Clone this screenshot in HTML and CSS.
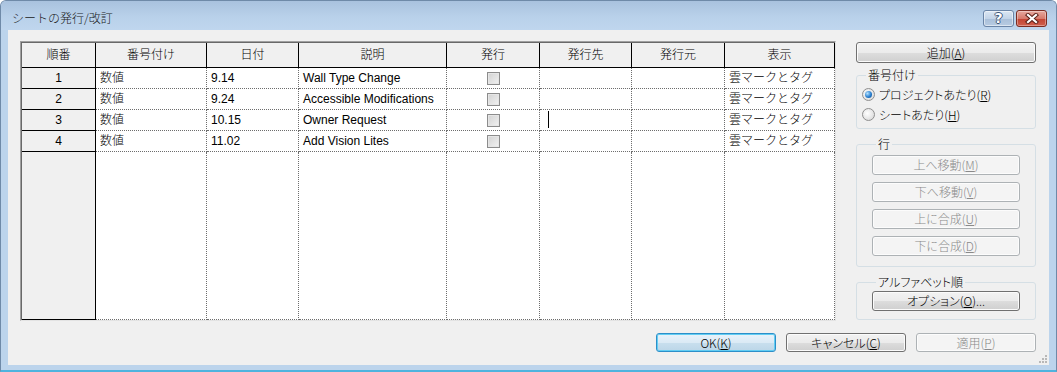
FILE: index.html
```html
<!DOCTYPE html>
<html lang="ja">
<head>
  <meta charset="UTF-8" />
  <title>シートの発行/改訂</title>
  <link rel="stylesheet" href="styles.css">
</head>
<body>
  <div class="window">
    <div class="titlebar">
      <span class="title">シートの発行/改訂</span>
      <div class="caption-btns">
        <button class="cap help">?</button>
        <button class="cap close">
          <svg width="14" height="11" viewBox="0 0 14 11">
            <path d="M3 2 L11 9 M11 2 L3 9" stroke="#5b2118" stroke-width="4.2" stroke-linecap="square"/>
            <path d="M3 2 L11 9 M11 2 L3 9" stroke="#fff" stroke-width="2.2" stroke-linecap="square"/>
          </svg>
        </button>
      </div>
    </div>

    <div class="client">
      <div class="top">
        <!-- revision table -->
        <div class="sheet-grid">
          <div class="hd">順番</div>
          <div class="hd">番号付け</div>
          <div class="hd">日付</div>
          <div class="hd">説明</div>
          <div class="hd">発行</div>
          <div class="hd">発行先</div>
          <div class="hd">発行元</div>
          <div class="hd">表示</div>

          <div class="rh">1</div>
          <div class="cell">数値</div>
          <div class="cell">9.14</div>
          <div class="cell">Wall Type Change</div>
          <div class="cell chk"><span class="checkbox"></span></div>
          <div class="cell"></div>
          <div class="cell"></div>
          <div class="cell">雲マークとタグ</div>

          <div class="rh">2</div>
          <div class="cell">数値</div>
          <div class="cell">9.24</div>
          <div class="cell">Accessible Modifications</div>
          <div class="cell chk"><span class="checkbox"></span></div>
          <div class="cell"></div>
          <div class="cell"></div>
          <div class="cell">雲マークとタグ</div>

          <div class="rh">3</div>
          <div class="cell">数値</div>
          <div class="cell">10.15</div>
          <div class="cell">Owner Request</div>
          <div class="cell chk"><span class="checkbox"></span></div>
          <div class="cell"><span class="caret"></span></div>
          <div class="cell"></div>
          <div class="cell">雲マークとタグ</div>

          <div class="rh">4</div>
          <div class="cell">数値</div>
          <div class="cell">11.02</div>
          <div class="cell">Add Vision Lites</div>
          <div class="cell chk"><span class="checkbox"></span></div>
          <div class="cell"></div>
          <div class="cell"></div>
          <div class="cell">雲マークとタグ</div>

          <div class="rh fill"></div>
          <div class="cell fill"></div>
          <div class="cell fill"></div>
          <div class="cell fill"></div>
          <div class="cell fill"></div>
          <div class="cell fill"></div>
          <div class="cell fill"></div>
          <div class="cell fill"></div>
        </div>

        <!-- side panel -->
        <div class="side">
          <button class="btn add">追加(<u>A</u>)</button>

          <fieldset class="group numbering">
            <legend>番号付け</legend>
            <label class="radio-row"><span class="radio on"></span><span>プロジェクトあたり(<u>R</u>)</span></label>
            <label class="radio-row"><span class="radio"></span><span>シートあたり(<u>H</u>)</span></label>
          </fieldset>

          <fieldset class="group rows">
            <legend>行</legend>
            <button class="btn" disabled>上へ移動(<u>M</u>)</button>
            <button class="btn" disabled>下へ移動(<u>V</u>)</button>
            <button class="btn" disabled>上に合成(<u>U</u>)</button>
            <button class="btn" disabled>下に合成(<u>D</u>)</button>
          </fieldset>

          <fieldset class="group alpha">
            <legend>アルファベット順</legend>
            <button class="btn">オプション(<u>O</u>)...</button>
          </fieldset>
        </div>
      </div>

      <div class="actions">
        <button class="btn default">OK(<u>K</u>)</button>
        <button class="btn">キャンセル(<u>C</u>)</button>
        <button class="btn" disabled>適用(<u>P</u>)</button>
      </div>

      <svg class="grip" width="10" height="10" viewBox="0 0 10 10">
        <rect x="7" y="1" width="2" height="2" fill="#b8b8b8"/>
        <rect x="4" y="4" width="2" height="2" fill="#b8b8b8"/>
        <rect x="7" y="4" width="2" height="2" fill="#b8b8b8"/>
        <rect x="1" y="7" width="2" height="2" fill="#b8b8b8"/>
        <rect x="4" y="7" width="2" height="2" fill="#b8b8b8"/>
        <rect x="7" y="7" width="2" height="2" fill="#b8b8b8"/>
      </svg>
    </div>
  </div>
</body>
</html>
```

FILE: styles.css
```css
* { box-sizing: border-box; }
body {
  margin: 0;
  background: #fff;
  font-family: "Noto Sans CJK JP", sans-serif;
  font-size: 12px;
  font-weight: 300;
  color: #000;
}
.window {
  width: 1057px;
  height: 372px;
  border: 1px solid #6f8aa8;
  border-bottom: 2px solid #4fb3de;
  border-radius: 6px 6px 0 0;
  background: #bcd4ec;
  padding: 0 7px 5px 7px;
  display: flex;
  flex-direction: column;
  overflow: hidden;
}
.titlebar {
  height: 29px;
  margin: 0 -7px;
  padding: 0 9px 0 11px;
  display: flex;
  justify-content: space-between;
  align-items: flex-start;
  background: linear-gradient(#a9c2de, #b9d1ea 55%, #bfd6ee);
}
.title {
  margin-top: 9px;
  line-height: 16px;
  color: #1a1a1a;
}
.caption-btns {
  display: flex;
  gap: 2px;
  margin-top: 9px;
}
.cap {
  width: 31px;
  height: 17px;
  padding: 0;
  border-radius: 3px;
  display: flex;
  align-items: center;
  justify-content: center;
}
.help {
  border: 1px solid #6a84a6;
  background: linear-gradient(#dbe6f3, #c3d4e8 50%, #a9bfd9 51%, #b7cbe2);
  box-shadow: inset 0 0 0 1px rgba(255, 255, 255, 0.5);
  color: #fff;
  font-family: "DejaVu Sans", sans-serif;
  font-weight: bold;
  font-size: 14px;
  line-height: 15px;
  text-shadow: 1px 0 #3f5677, -1px 0 #3f5677, 0 1px #3f5677, 0 -1px #3f5677;
}
.close {
  border: 1px solid #7b2c22;
  background: linear-gradient(#e6a99f, #d77a6c 50%, #c24332 51%, #d0604e);
  box-shadow: inset 0 0 0 1px rgba(255, 255, 255, 0.35);
}

.client {
  position: relative;
  flex: 1;
  background: #f0f0f0;
  padding: 11px 13px 13px 12px;
  display: flex;
  flex-direction: column;
}
.top {
  display: flex;
  gap: 20px;
  align-items: flex-start;
}

/* revision table */
.sheet-grid {
  width: 816px;
  height: 280px;
  display: grid;
  grid-template-columns: 74px 111px 92px 148px 93px 92px 93px 110px;
  grid-template-rows: 25px repeat(4, 21px) 1fr;
  border: 1px solid;
  border-color: #a0a0a0 #e3e3e3 #e3e3e3 #a0a0a0;
  padding: 1px 0 0 1px;
  box-shadow: inset 1px 1px 0 #696969;
  background: #fff;
  font-family: "Liberation Sans", "Noto Sans CJK JP", sans-serif;
  font-size: 12px;
}
.hd {
  background: #f0f0f0;
  border-right: 1px solid #000;
  border-bottom: 1px solid #000;
  text-align: center;
  line-height: 24px;
}
.rh {
  background: #f0f0f0;
  border-right: 1px solid #000;
  border-bottom: 1px solid #000;
  text-align: center;
  line-height: 20px;
}
.cell {
  background: #fff;
  border-right: 1px dotted #6d6d6d;
  border-bottom: 1px dotted #6d6d6d;
  padding-left: 4px;
  line-height: 20px;
  white-space: nowrap;
  overflow: hidden;
}
.cell.chk {
  padding: 0;
  display: flex;
  align-items: center;
  justify-content: center;
}
.checkbox {
  width: 13px;
  height: 13px;
  border: 1px solid #8c8c8c;
  background: linear-gradient(135deg, #d2d2d2, #f2f2f2);
  box-shadow: inset 0 0 0 1px #e6e6e6;
}
.caret {
  display: inline-block;
  width: 1px;
  height: 17px;
  margin-left: 4px;
  margin-top: 1px;
  background: #000;
  vertical-align: top;
}

/* side panel */
.side {
  width: 180px;
  margin-top: 1px;
  display: flex;
  flex-direction: column;
  font-feature-settings: "palt" 1;
}
.btn {
  font-family: "Noto Sans CJK JP", sans-serif;
  font-feature-settings: "palt" 1;
  font-size: 12px;
  font-weight: 300;
  line-height: 16px;
  padding: 0;
  color: #000;
  border: 1px solid #707070;
  border-radius: 3px;
  background: linear-gradient(#f2f2f2, #ebebeb 50%, #dddddd 51%, #cfcfcf);
  box-shadow: inset 0 0 0 1px #fbfbfb;
}
.btn u { text-underline-offset: 1px; }
.btn:disabled {
  color: #8a8a8a;
  border-color: #adb2b5;
  background: #f4f4f4;
  box-shadow: inset 0 0 0 1px #fcfcfc;
}
.btn.add {
  width: 180px;
  height: 21px;
}
.group {
  margin: 0;
  border: 1px solid #d5dfe5;
  border-radius: 3px;
  padding: 0;
}
.group legend {
  margin-left: 4px;
  padding: 0 2px;
  line-height: 14px;
}
.numbering {
  margin-top: 5px;
  padding: 2px 0 4px 5px;
}
.radio-row {
  display: flex;
  align-items: center;
  gap: 4px;
  height: 20px;
}
.radio {
  position: relative;
  width: 13px;
  height: 13px;
  border-radius: 50%;
  border: 1px solid #8f8f8f;
  background: radial-gradient(circle at 40% 40%, #ffffff, #dcdcdc 80%);
}
.radio.on::after {
  content: "";
  position: absolute;
  left: 2px;
  top: 2px;
  width: 7px;
  height: 7px;
  border-radius: 50%;
  background: radial-gradient(circle at 35% 35%, #b4e2ff, #2a7fcf 55%, #0d4a86);
}
.rows {
  margin-top: 8px;
  padding: 4px 15px 10px 15px;
  display: flex;
  flex-direction: column;
  gap: 7px;
}
.rows .btn,
.alpha .btn {
  width: 148px;
  height: 20px;
}
.alpha {
  margin-top: 8px;
  padding: 2px 15px 8px 15px;
}

.actions {
  margin-top: 12px;
  display: flex;
  justify-content: flex-end;
  gap: 10px;
}
.actions .btn {
  width: 120px;
  height: 19px;
  line-height: 15px;
}
.btn.default {
  border-color: #2c8fc9;
  background: linear-gradient(#e8f2fa, #dbeaf5 50%, #c8dfee 51%, #bcd6e8);
  box-shadow: inset 0 0 0 1px #62cdf3;
}
.grip {
  position: absolute;
  right: 1px;
  bottom: 1px;
}
```
